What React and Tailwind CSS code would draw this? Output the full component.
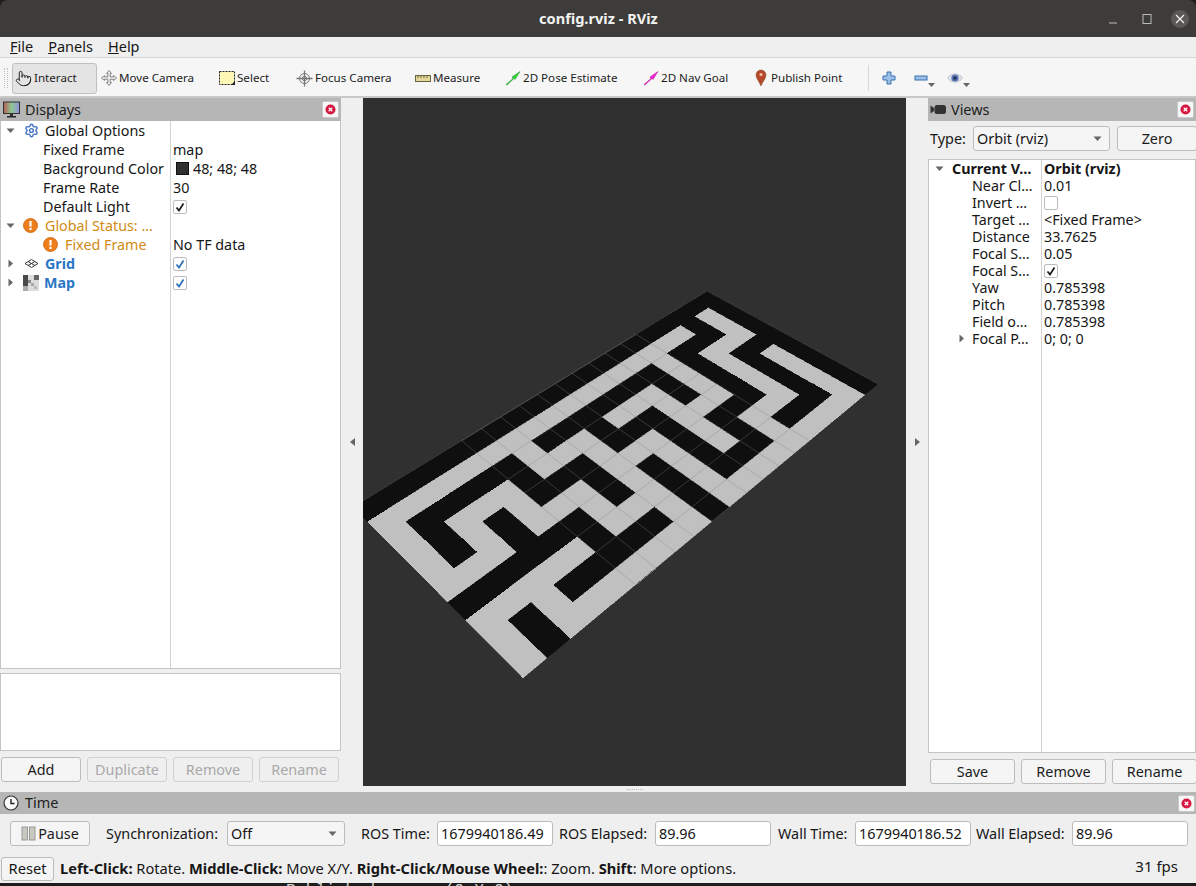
import React from "react";
import { Pointer, Settings } from "lucide-react";

const MAZE = [
  "BBBBBBBBBBBBBBBBBBBB",
  "WWWWWWWWWWWWWWWWWBWB",
  "WBBBBBWBBBBBBBWBBBWB",
  "WBWWWBWWWBWWWBWBWWWB",
  "WBWBWBBBWBBBWBWBWBBB",
  "WWWBWWWBWWWBWWWBWBWB",
  "BBBBBBWBWBWBWBBBWBWB",
  "WWWWWBWWWBWBWBWWWBWB",
  "WBWBBBBBWBWBBBWBBBWB",
  "WBWWWWWWWBWWWWWWWWWB",
];

const C = { a: 699.3, b: -102.1, c: 523, d: -143.4, e: -73.5, f: 678, g: 0.3922, h: 0.19226 };
function P(i, j) {
  const u = i / 20, v = j / 10;
  const w = 1 + C.g * u + C.h * v;
  return [(C.a * u + C.b * v + C.c) / w, (C.d * u + C.e * v + C.f) / w];
}
const pt = (i, j) => P(i, j).map((n) => n.toFixed(1)).join(",");

function MazeView() {
  const cells = [];
  for (let r = 0; r < 10; r++) {
    const j = 9 - r;
    for (let i = 0; i < 20; i++) {
      const col = MAZE[r][i] === "B" ? "#0f0f0f" : "#c0c0c0";
      cells.push(
        <polygon
          key={`${i}-${j}`}
          points={`${pt(i, j)} ${pt(i + 1, j)} ${pt(i + 1, j + 1)} ${pt(i, j + 1)}`}
          fill={col}
          stroke={col}
          strokeWidth="0.4"
        />
      );
    }
  }
  const lines = [];
  for (let i = 5; i <= 15; i++) {
    const [x1, y1] = P(i, 0), [x2, y2] = P(i, 10);
    lines.push(<line key={`v${i}`} x1={x1} y1={y1} x2={x2} y2={y2} />);
  }
  for (let j = 0; j <= 10; j++) {
    const [x1, y1] = P(5, j), [x2, y2] = P(15, j);
    lines.push(<line key={`h${j}`} x1={x1} y1={y1} x2={x2} y2={y2} />);
  }
  return (
    <svg className="w-full h-full block" viewBox="363 98 543 688">
      <g shapeRendering="crispEdges">{cells}</g>
      <g stroke="#808080" strokeOpacity="0.4" strokeWidth="0.9">{lines}</g>
      <polyline points={`${pt(0, 10)} ${pt(20, 10)} ${pt(20, 0)}`} fill="none" stroke="#808080" strokeOpacity="0.4" strokeWidth="0.7" />
    </svg>
  );
}

const Tri = ({ open, className = "" }) => (
  <svg width="9" height="9" viewBox="0 0 9 9" className={className}>
    {open ? <path d="M0.5 2.5 H8.5 L4.5 7 Z" fill="#666" /> : <path d="M2.5 0.5 V8.5 L7 4.5 Z" fill="#666" />}
  </svg>
);

const Check = ({ on, blue }) => (
  <span className="w-[14px] h-[14px] border border-[#bdbdbd] rounded-[2px] bg-white flex items-center justify-center">
    {on && (
      <svg width="10" height="10" viewBox="0 0 10 10">
        <path d="M1.5 5.5 L4 8.5 L8.5 1.5" fill="none" stroke={blue ? "#2a6fb5" : "#1a1a1a"} strokeWidth="1.7" />
      </svg>
    )}
  </span>
);

const CloseBtn = () => (
  <span className="w-[17px] h-[17px] bg-[#f7f7f7] border border-[#c9c9c9] rounded-[2px] flex items-center justify-center">
    <svg width="11" height="11" viewBox="0 0 11 11">
      <circle cx="5.5" cy="5.5" r="5" fill="#d5163f" />
      <path d="M3.7 3.7 L7.3 7.3 M7.3 3.7 L3.7 7.3" stroke="#fff" strokeWidth="1.3" />
    </svg>
  </span>
);

const Warn = () => (
  <svg width="15" height="15" viewBox="0 0 15 15">
    <circle cx="7.5" cy="7.5" r="7" fill="#ee7d1c" stroke="#c9650f" strokeWidth="0.8" />
    <rect x="6.4" y="3" width="2.2" height="5.6" fill="#fff" />
    <rect x="6.4" y="9.8" width="2.2" height="2.2" fill="#fff" />
  </svg>
);

const Btn = ({ children, className = "", disabled }) => (
  <div
    className={`h-[25px] border rounded-[3px] flex items-center justify-center text-[14.4px] ${
      disabled ? "border-[#d0d0d0] text-[#a9a9a9] bg-[#efefef]" : "border-[#bcbcbc] text-[#1c1c1c] bg-[#f5f5f5]"
    } ${className}`}
  >
    {children}
  </div>
);

const Combo = ({ children, className = "" }) => (
  <div className={`h-[25px] shrink-0 border border-[#bcbcbc] rounded-[3px] bg-[#f5f5f5] flex items-center justify-between pl-[3px] pr-[7px] text-[14.4px] ${className}`}>
    <span>{children}</span>
    <svg width="9" height="6" viewBox="0 0 9 6"><path d="M0.5 0.5 H8.5 L4.5 5 Z" fill="#666" /></svg>
  </div>
);

const Input = ({ children }) => (
  <div className="w-[116px] h-[25px] shrink-0 border border-[#bcbcbc] rounded-[3px] bg-white flex items-center pl-[3px] text-[14.4px]">{children}</div>
);

const PanelHead = ({ icon, title, className = "" }) => (
  <div className={`h-[23px] shrink-0 bg-[#b6b6b6] flex items-center text-[14.4px] text-[#1c1c1c] ${className}`}>
    {icon}
    <span>{title}</span>
    <span className="ml-auto mr-[2px]"><CloseBtn /></span>
  </div>
);

const ToolBtn = ({ icon, label, className = "" }) => (
  <div className={`h-[31px] flex items-center text-[11.6px] text-[#1c1c1c] shrink-0 ${className}`}>
    {icon}
    <span className="ml-[2px]">{label}</span>
  </div>
);

const LeftRow = ({ children, className = "" }) => (
  <div className={`h-[19px] flex items-center text-[14.3px] whitespace-nowrap ${className}`}>{children}</div>
);

const viewsRows = [
  ["Near Cl…", "0.01"],
  ["Invert …", null],
  ["Target …", "<Fixed Frame>"],
  ["Distance", "33.7625"],
  ["Focal S…", "0.05"],
  ["Focal S…", "check"],
  ["Yaw", "0.785398"],
  ["Pitch", "0.785398"],
  ["Field o…", "0.785398"],
  ["Focal P…", "0; 0; 0"],
];

export default function App() {
  return (
    <div className="w-[1196px] h-[886px] overflow-hidden flex flex-col bg-[#1d1d1d] text-[#161616] font-['Noto_Sans',sans-serif]">
      {/* title bar */}
      <div className="h-[37px] shrink-0 bg-[#3d3c3a] rounded-t-[8px] flex items-center text-white">
        <span className="ml-[539px] text-[14.6px] font-bold text-[#f2f2f2] whitespace-nowrap">config.rviz - RViz</span>
        <div className="ml-auto flex items-center">
          <svg width="12" height="12" viewBox="0 0 12 12" className="mr-[22px]"><path d="M2 10 H10" stroke="#bbb" strokeWidth="1" /></svg>
          <svg width="12" height="12" viewBox="0 0 12 12" className="mr-[18px]"><rect x="2" y="1.5" width="8" height="9" fill="none" stroke="#bbb" /></svg>
          <span className="w-[18px] h-[18px] mr-[7px] rounded-full bg-[#5a5957] flex items-center justify-center">
            <svg width="10" height="10" viewBox="0 0 10 10"><path d="M1 1 L9 9 M9 1 L1 9" stroke="#f2f2f2" strokeWidth="1.2" /></svg>
          </span>
        </div>
      </div>
      {/* menu */}
      <div className="h-[21px] shrink-0 bg-[#efefef] flex items-center pl-[10px] gap-[15px] text-[14.5px] border-b border-[#d8d8d8]">
        <span><u>F</u>ile</span>
        <span><u>P</u>anels</span>
        <span><u>H</u>elp</span>
      </div>
      {/* toolbar */}
      <div className="h-[40px] shrink-0 pt-[2px] bg-[#f6f6f6] border-b-2 border-[#c8c8c8] flex items-center">
        <span className="w-[4px] h-[20px] ml-[4px] mr-[4px] border-x border-dotted border-[#c0c0c0]" />
        <ToolBtn
          className="w-[85px] bg-[#e4e4e4] border border-[#c0c0c0] rounded-[3px] pl-[2px] box-border"
          icon={<Pointer size={17} strokeWidth={1.4} color="#222" />}
          label="Interact"
        />
        <ToolBtn
          className="ml-[4px] w-[118px]"
          icon={
            <svg width="16" height="16" viewBox="0 0 16 16" fill="#eee" stroke="#777" strokeWidth="0.9">
              <path d="M8 0.5 L10.5 3.5 H9.2 V6.8 H12.5 V5.5 L15.5 8 L12.5 10.5 V9.2 H9.2 V12.5 H10.5 L8 15.5 L5.5 12.5 H6.8 V9.2 H3.5 V10.5 L0.5 8 L3.5 5.5 V6.8 H6.8 V3.5 H5.5 Z" />
            </svg>
          }
          label="Move Camera"
        />
        <ToolBtn
          className="w-[77px]"
          icon={
            <svg width="16" height="14" viewBox="0 0 16 14">
              <rect x="0.5" y="0.5" width="15" height="13" fill="#fdf6b4" stroke="#222" strokeDasharray="2 1" />
              <path d="M16 10 V14 H12 Z" fill="#222" />
            </svg>
          }
          label="Select"
        />
        <ToolBtn
          className="w-[119px]"
          icon={
            <svg width="17" height="17" viewBox="0 0 17 17" fill="none" stroke="#777">
              <circle cx="8.5" cy="8.5" r="5" />
              <circle cx="8.5" cy="8.5" r="2.2" />
              <path d="M8.5 0.5 V16.5 M0.5 8.5 H16.5" strokeWidth="1.3" />
            </svg>
          }
          label="Focus Camera"
        />
        <ToolBtn
          className="w-[90px]"
          icon={
            <svg width="16" height="7" viewBox="0 0 16 7">
              <rect x="0.5" y="0.5" width="15" height="6" fill="#e3d79a" stroke="#6b6440" />
              <path d="M3 1 V3 M6 1 V3 M9 1 V3 M12 1 V3" stroke="#6b6440" />
            </svg>
          }
          label="Measure"
        />
        <ToolBtn
          className="w-[138px]"
          icon={
            <svg width="16" height="16" viewBox="0 0 16 16">
              <path d="M1 14.5 L8 8.5 L7 7 L15 1.5 L10 9.5 L9 8.5 L2 15 Z" fill="#2fd93a" stroke="#1c8a25" strokeWidth="0.5" />
            </svg>
          }
          label="2D Pose Estimate"
        />
        <ToolBtn
          className="w-[112px]"
          icon={
            <svg width="16" height="16" viewBox="0 0 16 16">
              <path d="M1 14.5 L8 8.5 L7 7 L15 1.5 L10 9.5 L9 8.5 L2 15 Z" fill="#ff22d8" stroke="#a3148a" strokeWidth="0.5" />
            </svg>
          }
          label="2D Nav Goal"
        />
        <ToolBtn
          className="w-[113px]"
          icon={
            <svg width="12" height="18" viewBox="0 0 12 18" className="mr-[2px]">
              <path d="M6 17 C4 12 1 9.5 1 6 A5 5 0 0 1 11 6 C11 9.5 8 12 6 17 Z" fill="#b5472a" stroke="#8a5a30" strokeWidth="0.6" />
              <circle cx="6" cy="5.5" r="1.6" fill="#f6c0a0" />
            </svg>
          }
          label="Publish Point"
        />
        <span className="w-px h-[26px] bg-[#d8d8d8] mr-[13px]" />
        <svg width="14" height="14" viewBox="0 0 14 14" className="mr-[18px]">
          <path d="M5 1 H9 V5 H13 V9 H9 V13 H5 V9 H1 V5 H5 Z" fill="#9dc0e8" stroke="#3a6fae" />
        </svg>
        <svg width="14" height="6" viewBox="0 0 14 6">
          <rect x="1" y="1" width="12" height="4" fill="#9dc0e8" stroke="#3a6fae" />
        </svg>
        <svg width="7" height="5" viewBox="0 0 7 5" className="mt-[15px] mr-[12px]"><path d="M0 0 H7 L3.5 4 Z" fill="#666" /></svg>
        <svg width="16" height="12" viewBox="0 0 16 12">
          <path d="M0.5 6 C4 0.5 12 0.5 15.5 6 C12 11.5 4 11.5 0.5 6 Z" fill="#dfe3ea" stroke="#aab" strokeWidth="0.6" />
          <circle cx="8" cy="6" r="3.6" fill="#5470ae" />
          <circle cx="8" cy="6" r="1.5" fill="#1d2a4d" />
        </svg>
        <svg width="7" height="5" viewBox="0 0 7 5" className="mt-[15px]"><path d="M0 0 H7 L3.5 4 Z" fill="#666" /></svg>
      </div>

      {/* main */}
      <div className="h-[694px] shrink-0 bg-[#efefef] flex">
        {/* displays */}
        <div className="w-[341px] shrink-0 flex flex-col">
          <PanelHead
            title="Displays"
            icon={
              <svg width="18" height="18" viewBox="0 0 18 18" className="ml-[3px] mr-[4px]">
                <defs>
                  <linearGradient id="scr" x1="0" x2="1">
                    <stop offset="0" stopColor="#b85a5a" />
                    <stop offset="0.5" stopColor="#8fc88f" />
                    <stop offset="1" stopColor="#9090e0" />
                  </linearGradient>
                </defs>
                <rect x="0.5" y="1" width="16" height="11.5" fill="url(#scr)" stroke="#333" />
                <rect x="7" y="12.5" width="3" height="2.5" fill="#333" />
                <rect x="4" y="15" width="9" height="1.5" fill="#222" />
              </svg>
            }
          />
          <div className="h-[548px] shrink-0 bg-white border border-[#c4c4c4] border-t-0 flex">
            <div className="w-[170px] shrink-0 border-r border-[#d4d4d4]">
              <LeftRow>
                <Tri open className="ml-[5px]" />
                <Settings size={15} color="#3f6fc0" strokeWidth={2.2} className="ml-[9px]" />
                <span className="ml-[6px]">Global Options</span>
              </LeftRow>
              <LeftRow className="pl-[42px]">Fixed Frame</LeftRow>
              <LeftRow className="pl-[42px]">Background Color</LeftRow>
              <LeftRow className="pl-[42px]">Frame Rate</LeftRow>
              <LeftRow className="pl-[42px]">Default Light</LeftRow>
              <LeftRow className="text-[#d08b14]">
                <Tri open className="ml-[5px]" />
                <span className="ml-[8px] flex"><Warn /></span>
                <span className="ml-[7px]">Global Status: …</span>
              </LeftRow>
              <LeftRow className="text-[#d08b14]">
                <span className="ml-[42px] flex"><Warn /></span>
                <span className="ml-[7px]">Fixed Frame</span>
              </LeftRow>
              <LeftRow className="font-bold text-[#2a76c6]">
                <Tri className="ml-[5px]" />
                <svg width="15" height="9" viewBox="0 0 15 9" className="ml-[9px]" fill="none" stroke="#333">
                  <path d="M7.5 0.5 L14 4.5 L7.5 8.5 L1 4.5 Z M4.2 2.5 L10.8 6.5 M10.8 2.5 L4.2 6.5" />
                </svg>
                <span className="ml-[6px]">Grid</span>
              </LeftRow>
              <LeftRow className="font-bold text-[#2a76c6]">
                <Tri className="ml-[5px]" />
                <svg width="16" height="16" viewBox="0 0 16 16" className="ml-[8px]">
                  <rect width="16" height="16" fill="#dcdcdc" />
                  <rect x="0" y="0" width="5" height="11" fill="#4a4a4a" />
                  <rect x="5" y="5" width="3" height="3" fill="#8a8a8a" />
                  <rect x="8" y="8" width="3" height="3" fill="#a8a8a8" />
                  <rect x="11" y="0" width="5" height="5" fill="#666" />
                  <rect x="11" y="11" width="3" height="3" fill="#bbb" />
                  <rect x="0" y="11" width="5" height="5" fill="#aaa" />
                </svg>
                <span className="ml-[5px]">Map</span>
              </LeftRow>
            </div>
            <div className="flex-1 pl-[2px]">
              <LeftRow />
              <LeftRow>map</LeftRow>
              <LeftRow>
                <span className="w-[13px] h-[13px] bg-[#303030] border border-[#111] ml-[3px] mr-[4px]" />
                48; 48; 48
              </LeftRow>
              <LeftRow>30</LeftRow>
              <LeftRow><Check on /></LeftRow>
              <LeftRow />
              <LeftRow>No TF data</LeftRow>
              <LeftRow><Check on blue /></LeftRow>
              <LeftRow><Check on blue /></LeftRow>
            </div>
          </div>
          <div className="h-[4px] shrink-0" />
          <div className="h-[78px] shrink-0 bg-white border border-[#c4c4c4]" />
          <div className="flex gap-[6px] pl-[1px] mt-[6px]">
            <Btn className="w-[80px]">Add</Btn>
            <Btn className="w-[80px]" disabled>Duplicate</Btn>
            <Btn className="w-[80px]" disabled>Remove</Btn>
            <Btn className="w-[80px]" disabled>Rename</Btn>
          </div>
        </div>

        {/* splitter */}
        <div className="w-[22px] shrink-0 flex items-center justify-center pb-[7px]">
          <svg width="5" height="8" viewBox="0 0 5 8"><path d="M5 0 V8 L0 4 Z" fill="#666" /></svg>
        </div>

        {/* canvas */}
        <div className="w-[543px] shrink-0">
          <div className="h-[688px] bg-[#303030] overflow-hidden">
            <MazeView />
          </div>
          <div className="h-[6px] flex items-center justify-center">
            <span className="w-[16px] border-t border-dotted border-[#bbb]" />
          </div>
        </div>

        {/* splitter */}
        <div className="w-[22px] shrink-0 flex items-center justify-center pb-[7px]">
          <svg width="5" height="8" viewBox="0 0 5 8"><path d="M0 0 V8 L5 4 Z" fill="#666" /></svg>
        </div>

        {/* views */}
        <div className="w-[268px] shrink-0 flex flex-col overflow-hidden">
          <PanelHead
            title="Views"
            icon={
              <svg width="17" height="11" viewBox="0 0 17 11" className="ml-[2px] mr-[4px]">
                <path d="M0.5 1.5 L4 4 V7 L0.5 9.5 Z" fill="#333" />
                <rect x="4.5" y="1" width="11.5" height="9" rx="2.5" fill="#333" />
              </svg>
            }
          />
          <div className="h-[38px] shrink-0 flex items-center pb-[3px]">
            <span className="ml-[2px] text-[14.4px] w-[43px] shrink-0">Type:</span>
            <Combo className="w-[137px]">Orbit (rviz)</Combo>
            <Btn className="w-[80px] ml-[7px] shrink-0">Zero</Btn>
          </div>
          <div className="h-[594px] shrink-0 bg-white border border-[#c4c4c4] flex">
            <div className="w-[113px] shrink-0 border-r border-[#d4d4d4] text-[14.3px]">
              <div className="h-[17px] flex items-center font-bold whitespace-nowrap">
                <Tri open className="ml-[6px]" />
                <span className="ml-[8px]">Current V…</span>
              </div>
              {viewsRows.map(([n], idx) => (
                <div key={idx} className="h-[17px] flex items-center whitespace-nowrap pl-[43px]">
                  {idx === 9 && <Tri className="mr-[6px] -ml-[15px]" />}
                  {n}
                </div>
              ))}
            </div>
            <div className="flex-1 pl-[2px] text-[14.3px]">
              <div className="h-[17px] flex items-center font-bold">Orbit (rviz)</div>
              {viewsRows.map(([, v], idx) => (
                <div key={idx} className="h-[17px] flex items-center whitespace-nowrap">
                  {v === null ? <Check /> : v === "check" ? <Check on /> : v}
                </div>
              ))}
            </div>
          </div>
          <div className="flex gap-[6px] pl-[2px] mt-[6px]">
            <Btn className="w-[85px] shrink-0">Save</Btn>
            <Btn className="w-[85px] shrink-0">Remove</Btn>
            <Btn className="w-[85px] shrink-0">Rename</Btn>
          </div>
        </div>
      </div>

      {/* time */}
      <div className="h-[91px] shrink-0 bg-[#efefef] flex flex-col">
        <div className="h-[22px] shrink-0 bg-[#b6b6b6] flex items-center text-[14.4px] text-[#1c1c1c]">
          <svg width="16" height="16" viewBox="0 0 16 16" className="ml-[3px] mr-[6px]">
            <circle cx="8" cy="8" r="7" fill="#fafafa" stroke="#333" strokeWidth="1.2" />
            <path d="M8 4 V8.5 H11.5" fill="none" stroke="#222" strokeWidth="1.4" />
          </svg>
          <span>Time</span>
          <span className="ml-auto mr-[1px]"><CloseBtn /></span>
        </div>
        <div className="h-[25px] mt-[7px] flex items-center text-[14.4px] whitespace-nowrap">
          <Btn className="w-[80px] ml-[10px] gap-[2px] shrink-0">
            <svg width="15" height="15" viewBox="0 0 15 15">
              <rect x="1" y="1" width="5.5" height="13" fill="#c8c8c0" stroke="#999" />
              <rect x="8.5" y="1" width="5.5" height="13" fill="#c8c8c0" stroke="#999" />
            </svg>
            Pause
          </Btn>
          <span className="ml-[16px] w-[121px] shrink-0">Synchronization:</span>
          <Combo className="w-[118px]">Off</Combo>
          <span className="ml-[16px] w-[76px] shrink-0">ROS Time:</span>
          <Input>1679940186.49</Input>
          <span className="ml-[6px] w-[96px] shrink-0">ROS Elapsed:</span>
          <Input>89.96</Input>
          <span className="ml-[7px] w-[77px] shrink-0">Wall Time:</span>
          <Input>1679940186.52</Input>
          <span className="ml-[5px] w-[96px] shrink-0">Wall Elapsed:</span>
          <Input>89.96</Input>
        </div>
        <div className="h-[24px] mt-[11px] flex items-center text-[14.65px] whitespace-nowrap">
          <div className="w-[53px] h-[24px] ml-[1px] border border-[#bcbcbc] rounded-[3px] bg-[#f5f5f5] flex items-center justify-center">Reset</div>
          <span className="ml-[6px]">
            <b>Left-Click:</b> Rotate. <b>Middle-Click:</b> Move X/Y. <b>Right-Click/Mouse Wheel:</b>: Zoom. <b>Shift</b>: More options.
          </span>
          <span className="ml-auto mr-[18px] -mt-[5px] text-[15px]">31 fps</span>
        </div>
      </div>
      <div className="flex-1 overflow-hidden pl-[286px] text-[16.5px] leading-[16px] text-[#d8d8d8] font-['Liberation_Mono',monospace] whitespace-pre">
        Published maze: (0 X 0)
      </div>
    </div>
  );
}
